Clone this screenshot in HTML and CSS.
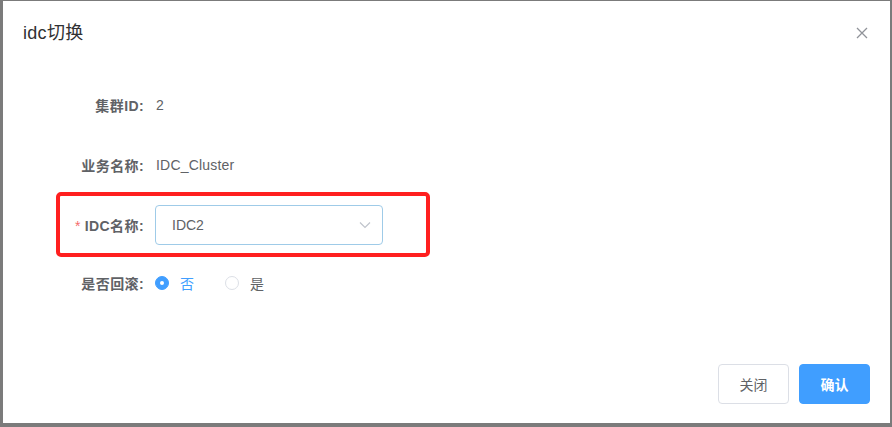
FILE: index.html
```html
<!DOCTYPE html>
<html lang="zh">
<head>
<meta charset="utf-8">
<link rel="stylesheet" href="styles.css">
</head>
<body>
<div class="dialog">
  <div class="header">
    <span class="title">idc切换</span>
    <svg class="close" width="12" height="12" viewBox="0 0 12 12"><path d="M1 1L11 11M11 1L1 11" stroke="#909399" stroke-width="1.3" fill="none"/></svg>
  </div>
  <div class="body">
    <div class="row">
      <div class="label">集群ID:</div>
      <div class="value">2</div>
    </div>
    <div class="row">
      <div class="label">业务名称:</div>
      <div class="value">IDC_Cluster</div>
    </div>
    <div class="row highlight-row">
      <div class="label"><span class="star">*</span>IDC名称:</div>
      <div class="select">
        <span>IDC2</span>
        <svg class="arrow" width="12" height="8" viewBox="0 0 12 8"><path d="M1 1.5L6 6.5L11 1.5" stroke="#c0c4cc" stroke-width="1.2" fill="none"/></svg>
      </div>
      <div class="annot"></div>
    </div>
    <div class="row last">
      <div class="label">是否回滚:</div>
      <div class="radios">
        <label class="radio checked"><span class="dot"></span><span class="rtext">否</span></label>
        <label class="radio"><span class="dot"></span><span class="rtext">是</span></label>
      </div>
    </div>
  </div>
  <div class="footer">
    <button class="btn">关闭</button>
    <button class="btn primary">确认</button>
  </div>
</div>
</body>
</html>
```
FILE: styles.css
```css
html, body {
  margin: 0;
  padding: 0;
  background: #fff;
}
body {
  font-family: "Liberation Sans", "Noto Sans CJK SC", sans-serif;
  font-size: 14px;
  color: #606266;
}
.dialog {
  box-sizing: border-box;
  width: 892px;
  height: 427px;
  border-style: solid;
  border-color: #7b7b7b;
  border-width: 1px 2px 4px 3px;
  display: flex;
  flex-direction: column;
}
.header {
  display: flex;
  align-items: center;
  justify-content: space-between;
  padding: 20px 22px 10px 20px;
}
.title {
  font-size: 18px;
  line-height: 24px;
  color: #303133;
  letter-spacing: 0.3px;
}
.close {
  display: block;
}
.body {
  padding: 30px 0 0 0;
  display: flex;
  flex-direction: column;
  gap: 20px;
}
.row {
  display: flex;
  align-items: center;
  height: 40px;
  position: relative;
}
.row.last {
  margin-top: -2px;
}
.label {
  width: 141px;
  padding-right: 11px;
  text-align: right;
  font-weight: bold;
  color: #606266;
  white-space: nowrap;
  letter-spacing: 0.4px;
}
.star {
  color: #f56c6c;
  font-weight: normal;
  margin-right: 4px;
}
.value {
  color: #606266;
  padding-left: 1px;
  letter-spacing: 0.2px;
}
.select {
  box-sizing: border-box;
  width: 228px;
  height: 40px;
  border: 1px solid #9fcbe8;
  border-radius: 4px;
  display: flex;
  align-items: center;
  justify-content: space-between;
  padding: 0 11px 0 16px;
  color: #606266;
}
.arrow {
  display: block;
}
.annot {
  position: absolute;
  left: 53px;
  top: -13px;
  width: 374px;
  height: 65px;
  box-sizing: border-box;
  border: 4px solid #ff1f1f;
  border-radius: 5px;
}
.radios {
  display: flex;
  align-items: center;
}
.radio {
  display: flex;
  align-items: center;
  margin-right: 31px;
}
.dot {
  box-sizing: border-box;
  width: 14px;
  height: 14px;
  border-radius: 50%;
  border: 1px solid #dcdfe6;
  background: #fff;
  position: relative;
}
.radio.checked .dot {
  border-color: #409eff;
  background: #409eff;
}
.radio.checked .dot::after {
  content: "";
  position: absolute;
  left: 4px;
  top: 4px;
  width: 4px;
  height: 4px;
  border-radius: 50%;
  background: #fff;
}
.rtext {
  padding-left: 11px;
  color: #606266;
}
.radio.checked .rtext {
  color: #409eff;
}
.footer {
  margin-top: auto;
  display: flex;
  justify-content: flex-end;
  gap: 10px;
  padding: 0 20px 19px 0;
}
.btn {
  box-sizing: border-box;
  width: 71px;
  height: 40px;
  border: 1px solid #dcdfe6;
  border-radius: 4px;
  background: #fff;
  color: #606266;
  font-family: "Liberation Sans", "Noto Sans CJK SC", sans-serif;
  font-size: 14px;
}
.btn.primary {
  background: #409eff;
  border-color: #409eff;
  color: #fff;
  font-weight: bold;
}
```
